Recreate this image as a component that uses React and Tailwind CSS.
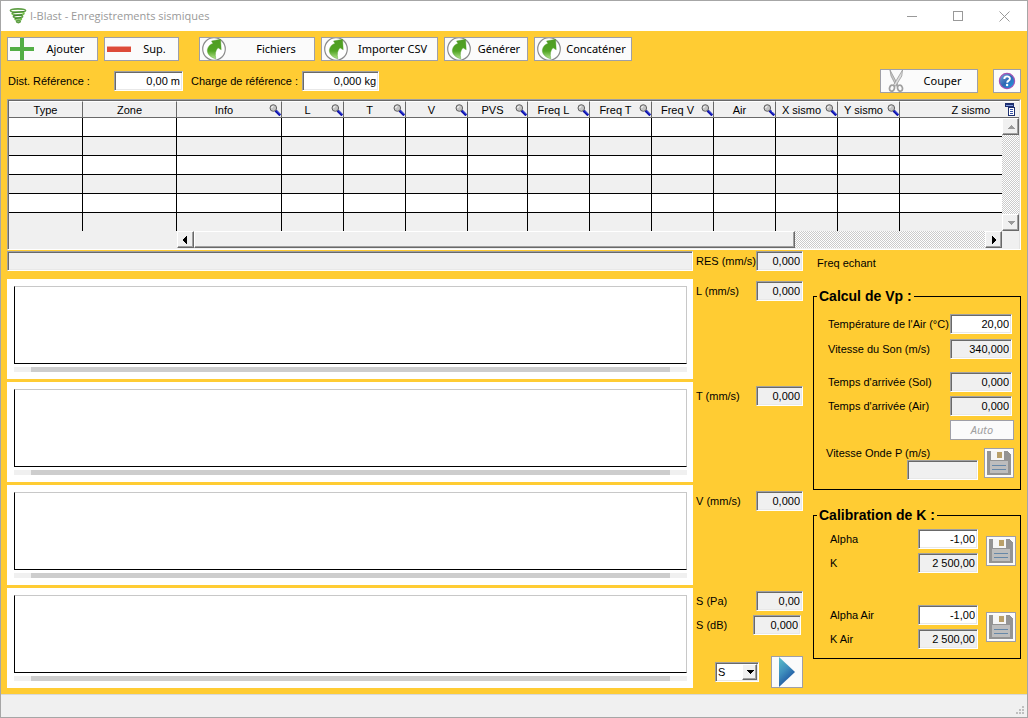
import React from "react";

const BUTTON =
  "flex items-center border border-[#9f9fa7] bg-[#fbfbfb] font-['Comic_Sans_MS','Noto_Sans',sans-serif] text-[11px] leading-4";
const SUNKEN =
  "border border-t-[#a0a0a0] border-l-[#a0a0a0] border-r-white border-b-white shadow-[inset_1px_1px_0_#696969,inset_-1px_-1px_0_#e8e8e8]";
const RAISED =
  "border border-t-white border-l-white border-r-[#696969] border-b-[#696969] bg-[#f0f0f0] shadow-[inset_-1px_-1px_0_#a0a0a0]";
const HATCH = "bg-[repeating-conic-gradient(#cbcbcb_0_25%,#ffffff_0_50%)] bg-[length:2px_2px]";

function LogoIcon() {
  return (
    <svg width="18" height="16" viewBox="0 0 18 16" aria-hidden="true">
      <g fill="none" stroke="#5f9f45" strokeWidth="1.6">
        <ellipse cx="9" cy="2.6" rx="7.6" ry="1.7" />
        <ellipse cx="9" cy="5.6" rx="6" ry="1.5" stroke="#74c04c" />
        <ellipse cx="9" cy="8.4" rx="4.6" ry="1.3" />
        <ellipse cx="9.2" cy="11" rx="3.2" ry="1.1" stroke="#74c04c" />
        <ellipse cx="9.4" cy="13.6" rx="1.9" ry="1" />
      </g>
      <path d="M3 5 15 3.4M4.5 8 13 6.6M6 10.6 12 9.6" stroke="#3e6d35" strokeWidth="0.8" />
    </svg>
  );
}

function ArrowIcon() {
  return (
    <svg width="24" height="22" viewBox="0 0 24 22" className="shrink-0" aria-hidden="true">
      <defs>
        <linearGradient id="leaf" x1="0" y1="0" x2="0" y2="1">
          <stop offset="0" stopColor="#4f9c22" />
          <stop offset="0.6" stopColor="#52a524" />
          <stop offset="1" stopColor="#b4e48e" />
        </linearGradient>
      </defs>
      <circle cx="12" cy="11" r="11.3" fill="#fff" stroke="#8d8d8d" strokeWidth="1.2" />
      <path
        d="M9.500 3 18.600 1.300 19.200 11.800 16 9.800C13.400 12.500 12.800 16 13.800 20.800 8 19.300 4.600 15.500 5.500 11.200 6.200 8 8.400 6.200 11 5.400z"
        fill="url(#leaf)"
        stroke="#4f9a28"
        strokeWidth="0.4"
      />
    </svg>
  );
}

function ScissorsIcon() {
  return (
    <svg width="16" height="22" viewBox="0 0 16 22" aria-hidden="true">
      <path d="M2 0 10 15 8.300 16.200 3 6z" fill="#c9c9c9" stroke="#8f8f8f" strokeWidth="0.7" />
      <path d="M14.500 0 5.500 15l2 1.200L13.800 6z" fill="#dedede" stroke="#8f8f8f" strokeWidth="0.7" />
      <g fill="none" stroke="#a0a0a0" strokeWidth="1.700">
        <ellipse cx="4" cy="18.200" rx="2.400" ry="3" transform="rotate(15 4 18.200)" />
        <ellipse cx="12" cy="18.200" rx="2.400" ry="3" transform="rotate(-15 12 18.200)" />
      </g>
    </svg>
  );
}

function HelpIcon() {
  return (
    <svg width="18" height="18" viewBox="0 0 18 18" aria-hidden="true">
      <defs>
        <linearGradient id="ball" x1="0" y1="0" x2="1" y2="1">
          <stop offset="0" stopColor="#7fa8dc" />
          <stop offset="0.5" stopColor="#2f68b4" />
          <stop offset="1" stopColor="#1c9fe8" />
        </linearGradient>
      </defs>
      <circle cx="9" cy="9" r="7.600" fill="url(#ball)" stroke="#a252b4" strokeWidth="1.200" />
      <path d="M6.300 7c0-3.400 5.600-3.400 5.600-.3 0 2-2.700 1.900-2.700 4" fill="none" stroke="#fff" strokeWidth="1.900" />
      <circle cx="9.100" cy="13" r="1.200" fill="#fff" />
    </svg>
  );
}

function SearchIcon() {
  return (
    <svg width="12" height="12" viewBox="0 0 12 12" className="shrink-0" aria-hidden="true">
      <path d="M6.500 6.500 11.300 11.300" stroke="#0a0aa8" strokeWidth="2.600" />
      <path d="M7 6.300 11.500 10.800" stroke="#5a7cff" strokeWidth="0.700" />
      <circle cx="4.300" cy="4" r="3.300" fill="#c4c4c4" stroke="#555" strokeWidth="0.900" />
      <path d="M2.600 4.200a1.700 1.700 0 0 1 1.700-1.700" stroke="#fff" fill="none" />
    </svg>
  );
}

function MenuIcon() {
  return (
    <svg width="11" height="13" viewBox="0 0 11 13" shapeRendering="crispEdges" aria-hidden="true">
      <path d="M0 0h9v4H0z" fill="#1d2f6f" />
      <path d="M1 2h7v1H1z" fill="#7f9be0" />
      <path d="M3 4h7v9H3z" fill="#1d2f6f" />
      <path d="M4 5h5v7H4z" fill="#fff" />
      <path d="M5 6h3v1H5zM5 8h3v1H5zM5 10h3v1H5z" fill="#3a55a8" />
    </svg>
  );
}

function DiskIcon() {
  return (
    <svg width="24" height="24" viewBox="0 0 24 24" shapeRendering="crispEdges" aria-hidden="true">
      <path d="M0 0h20l4 4v20H0z" fill="#949494" />
      <path d="M4 0h13v9H4z" fill="#f6f6f6" />
      <path d="M10 1h5v6h-5z" fill="#b9a06a" />
      <path d="M3 10h18v12H3z" fill="#bdbdbd" />
      <path d="M5 14h14v1H5zM5 18h14v1H5z" fill="#6688a8" />
    </svg>
  );
}

function PlayIcon() {
  return (
    <svg width="16" height="30" viewBox="0 0 16 30" aria-hidden="true">
      <defs>
        <linearGradient id="play" x1="0" y1="0" x2="0.500" y2="1">
          <stop offset="0" stopColor="#5cc0c8" />
          <stop offset="0.500" stopColor="#3f8fbd" />
          <stop offset="1" stopColor="#174a9c" />
        </linearGradient>
      </defs>
      <path d="M0 0 16 15 0 30z" fill="url(#play)" />
    </svg>
  );
}

function Triangle({ d, muted }) {
  return (
    <svg width="8" height="8" viewBox="0 0 8 8" shapeRendering="crispEdges" aria-hidden="true">
      <path d={d} fill={muted ? "#9a9a9a" : "#000"} />
    </svg>
  );
}

function Field({ id, value, width, editable }) {
  return (
    <input
      id={id}
      defaultValue={value}
      readOnly={!editable}
      className={`h-5 shrink-0 px-[2px] text-right text-[11px] leading-4 text-black outline-none ${SUNKEN} ${width} ${
        editable ? "bg-white" : "bg-[#f0f0f0]"
      }`}
    />
  );
}

function Row({ id, label, value, width, editable, className = "" }) {
  return (
    <div className={`flex items-center justify-between ${className}`}>
      <label htmlFor={id} className="whitespace-nowrap">
        {label}
      </label>
      <Field id={id} value={value} width={width} editable={editable} />
    </div>
  );
}

const COLUMNS = [
  { name: "Type", width: "w-[74px]" },
  { name: "Zone", width: "w-[94px]" },
  { name: "Info", width: "w-[105px]", search: true },
  { name: "L", width: "w-[62px]", search: true },
  { name: "T", width: "w-[62px]", search: true },
  { name: "V", width: "w-[62px]", search: true },
  { name: "PVS", width: "w-[60px]", search: true },
  { name: "Freq L", width: "w-[62px]", search: true },
  { name: "Freq T", width: "w-[62px]", search: true },
  { name: "Freq V", width: "w-[62px]", search: true },
  { name: "Air", width: "w-[62px]", search: true },
  { name: "X sismo", width: "w-[62px]", search: true },
  { name: "Y sismo", width: "w-[62px]", search: true },
];
const ROWS = [0, 1, 2, 3, 4, 5];
const HEAD = "h-[17px] border-t border-b border-t-white border-b-[#696969] p-0 font-normal";

function RecordTable() {
  return (
    <div className="mt-1.5 border border-t-[#a0a0a0] border-r-white border-b-white border-l-[#a0a0a0] bg-[#f0f0f0]">
      <div className="border-t border-r border-l border-[#696969] border-r-[#e3e3e3] pb-px">
        <table className="w-full table-fixed border-separate border-spacing-0">
          <thead>
            <tr>
              {COLUMNS.map((c) => (
                <th key={c.name} className={`${HEAD} ${c.width} border-r border-r-[#696969]`}>
                  <div className="flex items-center">
                    <span className={`flex-1 text-center whitespace-nowrap ${c.search ? "pl-0.5" : ""}`}>{c.name}</span>
                    {c.search && <SearchIcon />}
                  </div>
                </th>
              ))}
              <th className={`${HEAD} pr-3 text-right`}>Z sismo</th>
              <th className={`${HEAD} w-[17px]`}>
                <button aria-label="Colonnes" className="flex w-full justify-center">
                  <MenuIcon />
                </button>
              </th>
            </tr>
          </thead>
          <tbody>
            {ROWS.map((r) => (
              <tr key={r} className={r % 2 ? "bg-[#f0f0f0]" : "bg-white"}>
                {COLUMNS.map((c) => (
                  <td
                    key={c.name}
                    className={`border-r border-black p-0 ${r < 5 ? "h-[19px] border-b" : "h-[18px]"}`}
                  />
                ))}
                <td className={`border-black p-0 ${r < 5 ? "h-[19px] border-b" : "h-[18px]"}`} />
                {r === 0 && (
                  <td rowSpan={6} className={`h-[113px] p-0 ${HATCH}`}>
                    <div className="flex h-[113px] flex-col justify-between">
                      <button aria-label="Haut" className={`flex h-[17px] items-center justify-center ${RAISED}`}>
                        <Triangle d="M4 2h1v1h1v1h1v1h1v1H1V5h1V4h1V3h1z" muted />
                      </button>
                      <button aria-label="Bas" className={`flex h-[17px] items-center justify-center ${RAISED}`}>
                        <Triangle d="M1 2h7v1H7v1H6v1H5v1H4V5H3V4H2V3H1z" muted />
                      </button>
                    </div>
                  </td>
                )}
              </tr>
            ))}
          </tbody>
        </table>
        <div className="flex h-[17px] pr-[17px] pl-[168px]">
          <button aria-label="Gauche" className={`flex w-[17px] items-center justify-center ${RAISED}`}>
            <Triangle d="M5 0v8H4V7H3V6H2V5H1V3h1V2h1V1h1V0z" />
          </button>
          <div className={`flex-1 ${HATCH}`}>
            <div className={`h-[17px] w-[76%] ${RAISED}`} />
          </div>
          <button aria-label="Droite" className={`flex w-[17px] items-center justify-center ${RAISED}`}>
            <Triangle d="M2 0v8h1V7h1V6h1V5h1V3H5V2H4V1H3V0z" />
          </button>
        </div>
      </div>
    </div>
  );
}

function Chart() {
  return (
    <div className="h-[100px] bg-white px-1.5 pt-[7px]">
      <div className="ml-px h-[78px] border border-t-[#c8c8c8] border-r-[#c8c8c8] border-b-black border-l-black" />
      <div className="mt-[3px] ml-px h-[5px] bg-[#f0f0f0] px-[17px]">
        <div className="h-full bg-[#cdcdcd]" />
      </div>
    </div>
  );
}

function SaveButton({ label }) {
  return (
    <button
      aria-label={label}
      className="flex size-[30px] shrink-0 items-center justify-center border border-[#9f9fa7] bg-[#fbfbfb]"
    >
      <DiskIcon />
    </button>
  );
}

function Panel({ title, className, children }) {
  return (
    <fieldset className={`min-w-0 border border-black ${className}`}>
      <legend className="ml-[3px] px-0.5 text-[14px] leading-[18px] font-bold">{title}</legend>
      {children}
    </fieldset>
  );
}

export default function App() {
  return (
    <div className="flex min-h-screen flex-col border border-[#a6a6a6] bg-[#ffcc33] font-['Liberation_Sans',Arial,sans-serif] text-[11px] leading-[14px] text-black">
      <header className="flex h-[30px] items-center bg-white pl-2 font-['Open_Sans','Noto_Sans',sans-serif] text-[#999999]">
        <LogoIcon />
        <h1 className="ml-[3px] flex-1 text-[11px]">I-Blast - Enregistrements sismiques</h1>
        <button aria-label="Réduire" className="flex w-[46px] justify-center">
          <svg width="11" height="11" viewBox="0 0 11 11" shapeRendering="crispEdges">
            <path d="M0 5h10v1H0z" fill="#999" />
          </svg>
        </button>
        <button aria-label="Agrandir" className="flex w-[46px] justify-center">
          <svg width="11" height="11" viewBox="0 0 11 11" shapeRendering="crispEdges">
            <path d="M.5.5h9v9h-9z" fill="none" stroke="#999" />
          </svg>
        </button>
        <button aria-label="Fermer" className="flex w-[46px] justify-center">
          <svg width="11" height="11" viewBox="0 0 11 11">
            <path d="M.5.5l10 10M10.500.5l-10 10" stroke="#999" />
          </svg>
        </button>
      </header>

      <main className="flex-1 px-1.5 pt-1.5 pb-1.5">
        <div className="flex">
          <button className={`${BUTTON} h-6 w-[91px] pl-0.5`}>
            <svg width="24" height="22" viewBox="0 0 24 22" aria-hidden="true">
              <path d="M0 9h24v4H0zM10 0h4v22h-4z" fill="#53ae45" />
            </svg>
            <span className="flex-1 text-center">Ajouter</span>
          </button>
          <button className={`${BUTTON} ml-1.5 h-6 w-[75px] pl-0.5`}>
            <svg width="24" height="22" viewBox="0 0 24 22" aria-hidden="true">
              <path d="M0 9h24v5H0z" fill="#dd4b39" />
              <path d="M0 8h24v1H0z" fill="#f0a79e" />
            </svg>
            <span className="flex-1 text-center">Sup.</span>
          </button>
          <button className={`${BUTTON} ml-5 h-6 w-[116px] pl-0.5`}>
            <ArrowIcon />
            <span className="flex-1 pl-4 pr-1 text-center">Fichiers</span>
          </button>
          <button className={`${BUTTON} ml-1.5 h-6 w-[117px] pl-0.5`}>
            <ArrowIcon />
            <span className="flex-1 text-center whitespace-nowrap">Importer CSV</span>
          </button>
          <button className={`${BUTTON} ml-1.5 h-6 w-[84px] pl-0.5`}>
            <ArrowIcon />
            <span className="flex-1 text-center">Générer</span>
          </button>
          <button className={`${BUTTON} ml-1.5 h-6 w-[98px] pl-0.5`}>
            <ArrowIcon />
            <span className="flex-1 text-center">Concaténer</span>
          </button>
        </div>

        <div className="mt-2 flex items-center">
          <label htmlFor="dist" className="w-[107px] pl-px">
            Dist. Référence :
          </label>
          <Field id="dist" value="0,00 m" width="w-[69px]" editable />
          <label htmlFor="charge" className="w-[119px] pl-2 whitespace-nowrap">
            Charge de référence :
          </label>
          <Field id="charge" value="0,000 kg" width="w-[77px]" editable />
          <button className={`${BUTTON} ml-auto h-6 w-[98px] pl-[7px]`}>
            <ScissorsIcon />
            <span className="flex-1 pl-1 text-center">Couper</span>
          </button>
          <button aria-label="Aide" className={`${BUTTON} ml-[15px] h-6 w-7 justify-center`}>
            <HelpIcon />
          </button>
        </div>

        <RecordTable />

        <div className="mt-px flex items-start">
          <section className="min-w-0 flex-1">
            <input aria-label="Message" readOnly className={`block h-5 w-full bg-[#f0f0f0] outline-none ${SUNKEN}`} />
            <div className="mt-2 flex flex-col gap-[3px]">
              <Chart />
              <Chart />
              <Chart />
              <Chart />
            </div>
          </section>

          <section className="ml-[3px] w-[107px] shrink-0">
            <Row id="res" label="RES (mm/s)" value="0,000" width="w-[47px]" />
            <Row id="l" label="L (mm/s)" value="0,000" width="w-[47px]" className="mt-2.5" />
            <Row id="t" label="T (mm/s)" value="0,000" width="w-[47px]" className="mt-[85px]" />
            <Row id="v" label="V (mm/s)" value="0,000" width="w-[47px]" className="mt-[85px]" />
            <Row id="pa" label="S (Pa)" value="0,00" width="w-[47px]" className="mt-20" />
            <Row id="db" label="S (dB)" value="0,000" width="w-[48px]" className="mt-1 pr-0.5" />
            <div className="mt-[21px] flex items-center justify-end gap-3">
              <div className={`relative h-5 w-11 bg-white ${SUNKEN}`}>
                <select aria-label="Signal" className="size-full appearance-none bg-transparent pl-0.5 outline-none">
                  <option>S</option>
                </select>
                <span
                  className={`pointer-events-none absolute top-px right-px flex h-4 w-[15px] items-center justify-center ${RAISED}`}
                >
                  <Triangle d="M1 2h7v1H7v1H6v1H5v1H4V5H3V4H2V3H1z" />
                </span>
              </div>
              <button
                aria-label="Lecture"
                className="flex size-8 items-center justify-center border border-[#9f9fa7] bg-[#fbfbfb]"
              >
                <PlayIcon />
              </button>
            </div>
          </section>

          <section className="ml-2.5 w-[208px] shrink-0">
            <p className="mt-[5px] ml-1">Freq echant</p>
            <Panel title="Calcul de Vp :" className="mt-[17px]">
              <div className="pt-[9px] pr-1.5 pb-[9px] pl-3">
                <div className="pr-0.5 pl-0.5">
                  <Row id="temp" label="Température de l'Air (°C)" value="20,00" width="w-[62px]" editable />
                  <Row id="son" label="Vitesse du Son (m/s)" value="340,000" width="w-[62px]" className="mt-[5px]" />
                  <Row id="sol" label="Temps d'arrivée (Sol)" value="0,000" width="w-[62px]" className="mt-[13px]" />
                  <Row id="air" label="Temps d'arrivée (Air)" value="0,000" width="w-[62px]" className="mt-1" />
                </div>
                <button disabled className={`${BUTTON} mt-1 ml-auto h-5 w-16 justify-center text-[#a0a0a0] italic`}>
                  Auto
                </button>
                <div className="mt-1.5 flex items-center justify-between">
                  <div className="flex flex-1 flex-col">
                    <label htmlFor="onde">Vitesse Onde P (m/s)</label>
                    <div className="flex justify-end pr-1.5">
                      <Field id="onde" value="" width="w-[71px]" />
                    </div>
                  </div>
                  <SaveButton label="Enregistrer Vp" />
                </div>
              </div>
            </Panel>
            <Panel title="Calibration de K :" className="mt-4">
              <div className="pt-[5px] pr-1 pb-[9px] pl-4">
                <div className="flex items-center gap-2">
                  <div className="flex-1">
                    <Row id="alpha" label="Alpha" value="-1,00" width="w-[60px]" editable />
                    <Row id="k" label="K" value="2 500,00" width="w-[60px]" className="mt-1" />
                  </div>
                  <SaveButton label="Enregistrer K" />
                </div>
                <div className="mt-8 flex items-center gap-2">
                  <div className="flex-1">
                    <Row id="alpha-air" label="Alpha Air" value="-1,00" width="w-[60px]" editable />
                    <Row id="k-air" label="K Air" value="2 500,00" width="w-[60px]" className="mt-1" />
                  </div>
                  <SaveButton label="Enregistrer K Air" />
                </div>
              </div>
            </Panel>
          </section>
        </div>
      </main>

      <footer className="flex h-[23px] items-end justify-end border-t border-[#d8d8d8] bg-[#f0f0f0] p-0.5">
        <svg width="9" height="9" viewBox="0 0 9 9" shapeRendering="crispEdges" aria-hidden="true">
          <path d="M6 0h2v2H6zM3 3h2v2H3zM6 3h2v2H6zM0 6h2v2H0zM3 6h2v2H3zM6 6h2v2H6z" fill="#bfbfbf" />
        </svg>
      </footer>
    </div>
  );
}
